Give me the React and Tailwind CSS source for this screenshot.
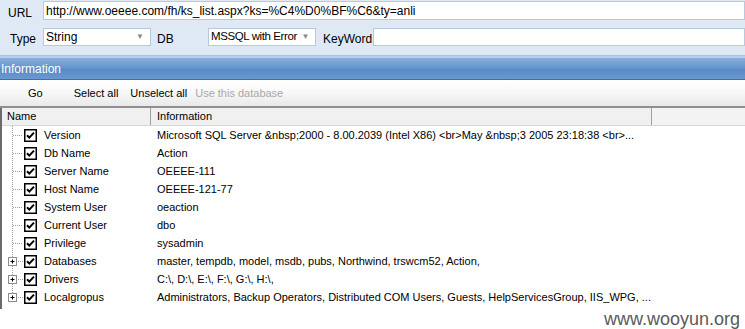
import React from "react";

const ROWS = [
  { name: "Version", info: "Microsoft SQL Server &nbsp;2000 - 8.00.2039 (Intel X86) <br>May &nbsp;3 2005 23:18:38 <br>..." },
  { name: "Db Name", info: "Action" },
  { name: "Server Name", info: "OEEEE-111" },
  { name: "Host Name", info: "OEEEE-121-77" },
  { name: "System User", info: "oeaction" },
  { name: "Current User", info: "dbo" },
  { name: "Privilege", info: "sysadmin" },
  { name: "Databases", info: "master, tempdb, model, msdb, pubs, Northwind, trswcm52, Action,", expand: true },
  { name: "Drivers", info: "C:\\, D:\\, E:\\, F:\\, G:\\, H:\\,", expand: true },
  { name: "Localgropus", info: "Administrators, Backup Operators, Distributed COM Users, Guests, HelpServicesGroup, IIS_WPG, ...", expand: true },
];

function TreeLines({ expand, last }) {
  return (
    <svg width="22" height="18" className="shrink-0">
      <line x1="10.5" y1="0" x2="10.5" y2={last ? 9 : 18} stroke="#a0a0a0" strokeDasharray="1 1" />
      <line x1={expand ? 14 : 11} y1="9.5" x2="21" y2="9.5" stroke="#a0a0a0" strokeDasharray="1 1" />
      {expand && (
        <g>
          <rect x="6.5" y="5.5" width="8" height="8" fill="#fff" stroke="#8c8c8c" />
          <line x1="8.5" y1="9.5" x2="12.5" y2="9.5" stroke="#000" />
          <line x1="10.5" y1="7.5" x2="10.5" y2="11.5" stroke="#000" />
        </g>
      )}
    </svg>
  );
}

function Check() {
  return (
    <svg width="13" height="13" className="shrink-0">
      <rect x="0.75" y="0.75" width="11.5" height="11.5" fill="#fff" stroke="#000" strokeWidth="1.5" />
      <path d="M3 6.2 L5.3 8.6 L10 3.6" fill="none" stroke="#000" strokeWidth="2" />
    </svg>
  );
}

function Select({ value, className }) {
  return (
    <div className={`flex h-[18px] items-center justify-between whitespace-nowrap border border-[#b9c9dd] bg-white pl-[2px] pr-[6px] ${className}`}>
      <span>{value}</span>
      <span className="text-[8px] text-[#8a8a8a]">▼</span>
    </div>
  );
}

export default function App() {
  return (
    <div className="relative h-[329px] w-[745px] overflow-hidden bg-white font-['Liberation_Sans',Tahoma,sans-serif] text-[11px] text-black">
      <section className="flex h-[56px] flex-col gap-[8px] border-b border-[#a9c2e2] bg-[#dfe9f6] pt-[1px] text-[12px]">
        <div className="flex items-end">
          <span className="w-[43px] pl-[8px] leading-[14px]">URL</span>
          <div className="flex h-[19px] flex-1 items-center border border-[#b9c9dd] bg-white pl-[2px]">
            http://www.oeeee.com/fh/ks_list.aspx?ks=%C4%D0%BF%C6&amp;ty=anli
          </div>
        </div>
        <div className="flex items-end">
          <span className="w-[43px] pl-[10px] leading-[13px]">Type</span>
          <Select value="String" className="w-[108px]" />
          <span className="w-[57px] pl-[6px] leading-[13px]">DB</span>
          <Select value="MSSQL with Error" className="w-[108px] text-[11.5px] tracking-[-0.4px]" />
          <span className="w-[57px] pl-[7px] leading-[13px]">KeyWord</span>
          <div className="h-[18px] flex-1 border border-[#b9c9dd] bg-white" />
        </div>
      </section>

      <div className="h-[2px] bg-[#b7cfee]" />
      <div className="flex h-[22px] items-center border-b border-[#3f6ea8] bg-[linear-gradient(180deg,#86aedd_0%,#6796cf_45%,#5a8bc8_55%,#6a98d0_100%)] pl-[1px] text-[12px] text-white">
        Information
      </div>

      <div className="flex h-[28px] items-center border-b-2 border-[#8f8f8f] bg-[linear-gradient(180deg,#ffffff_0%,#f7f7f7_50%,#e9e9e9_100%)]">
        <span className="ml-[28px]">Go</span>
        <span className="ml-[31px]">Select all</span>
        <span className="ml-[12px]">Unselect all</span>
        <span className="ml-[8px] text-[#a8a8a8]">Use this database</span>
      </div>

      <div className="flex h-[201px] flex-col border-l-2 border-[#6b6b6b]">
        <div className="flex h-[18px] shrink-0 items-center border-b border-[#d6d6d6] bg-[#f0f0f0]">
          <div className="flex h-full w-[149px] items-center border-r border-[#a0a0a0] pl-[5px]">Name</div>
          <div className="flex h-full w-[501px] items-center border-r border-[#a0a0a0] pl-[6px]">Information</div>
          <div className="h-full flex-1 bg-[#f3f3f3]" />
        </div>
        {ROWS.map((row, i) => (
          <div key={row.name} className="flex h-[18px] shrink-0 items-center">
            <TreeLines expand={row.expand} last={i === ROWS.length - 1} />
            <Check />
            <span className="ml-[7px] w-[113px] shrink-0">{row.name}</span>
            <span className="whitespace-nowrap">{row.info}</span>
          </div>
        ))}
      </div>

      <div className="absolute bottom-[1px] right-[5px] font-['Liberation_Sans',Arial,sans-serif] text-[18px] leading-none text-[#5a5a5a]">
        www.wooyun.org
      </div>
    </div>
  );
}
